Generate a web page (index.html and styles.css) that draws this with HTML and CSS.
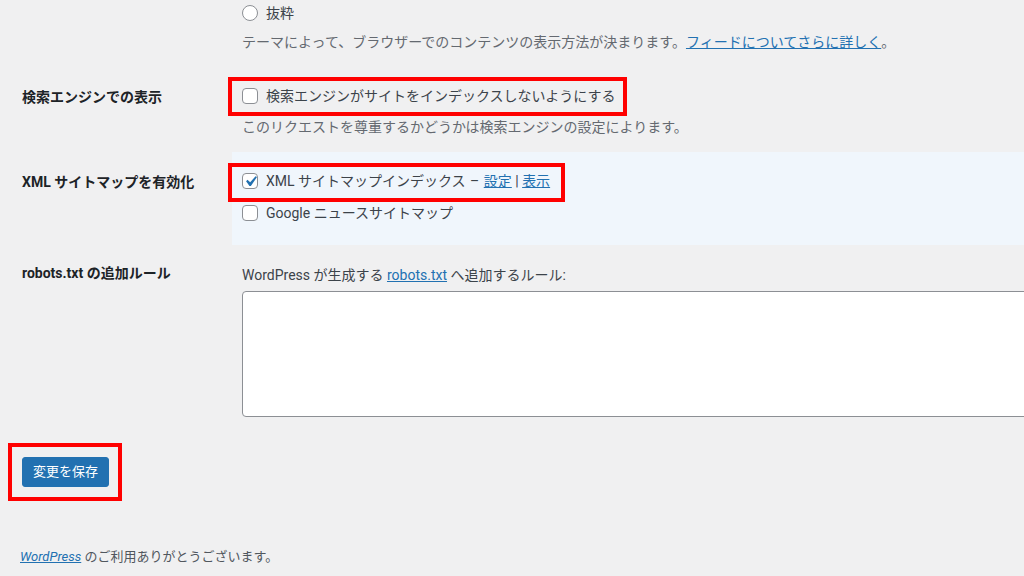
FILE: index.html
```html
<!DOCTYPE html>
<html lang="ja">
<head>
<meta charset="utf-8">
<title>表示設定</title>
<link rel="stylesheet" href="styles.css">
</head>
<body>
<div class="wrap">
  <div class="row row-first">
    <div class="th"></div>
    <div class="td td-first">
      <label class="opt"><span class="radio"></span><span>抜粋</span></label>
      <p class="desc desc-first">テーマによって、ブラウザーでのコンテンツの表示方法が決まります。<a href="#">フィードについてさらに詳しく</a>。</p>
    </div>
  </div>

  <div class="row">
    <div class="th">検索エンジンでの表示</div>
    <div class="td td-search">
      <div><label class="opt hl"><span class="cb"></span><span>検索エンジンがサイトをインデックスしないようにする</span></label></div>
      <p class="desc desc-search">このリクエストを尊重するかどうかは検索エンジンの設定によります。</p>
    </div>
  </div>

  <div class="row row-sitemap">
    <div class="th">XML サイトマップを有効化</div>
    <div class="td td-sitemap">
      <div><label class="opt hl hl-narrow"><span class="cb"><svg viewBox="0 0 20 20" width="21" height="21"><path d="M14.83 4.89l1.34.94-5.81 8.38H9.02L5.78 9.67l1.34-1.25 2.57 2.4z" fill="#2271b1"/></svg></span><span>XML サイトマップインデックス <span class="dash">–</span> <a href="#">設定</a> | <a href="#">表示</a></span></label></div>
      <div class="opt-gap"><label class="opt"><span class="cb"></span><span>Google ニュースサイトマップ</span></label></div>
    </div>
  </div>

  <div class="row">
    <div class="th th-robots">robots.txt の追加ルール</div>
    <div class="td td-robots">
      <p class="robots-text">WordPress が生成する <a href="#">robots.txt</a> へ追加するルール:</p>
      <textarea class="rules"></textarea>
    </div>
  </div>

  <div class="submit">
    <span class="btn-hl"><button class="btn">変更を保存</button></span>
  </div>
</div>
<footer class="footer"><a href="#" class="wp-link">WordPress</a> のご利用ありがとうございます。</footer>
</body>
</html>
```

FILE: styles.css
```css
html, body {
  margin: 0;
  padding: 0;
  background: #f0f0f1;
  overflow: hidden;
  width: 1024px;
  height: 576px;
}
body {
  font-family: Roboto, "Noto Sans CJK JP", sans-serif;
  font-size: 14px;
  color: #3c434a;
}
a {
  color: #2271b1;
  text-decoration: underline;
}
p { margin: 0; }

.wrap {
  padding-left: 22px;
}
.row {
  display: grid;
  grid-template-columns: 210px 1fr;
}
.th {
  font-weight: 700;
  color: #1d2327;
  line-height: 20px;
  padding-top: 20px;
}
.td {
  padding: 15px 10px;
}
.td-first { padding-top: 1px; }
.td-search { padding-top: 17px; }
.td-sitemap {
  background: #f0f6fc;
  padding: 17px 10px 20px;
}
.td-robots { padding-top: 20px; }
.th-robots { padding-top: 18px; }

.opt {
  display: inline-flex;
  align-items: center;
  gap: 8px;
  line-height: 24px;
  height: 24px;
  color: #3c434a;
}
.opt-gap { margin-top: 6px; }

.radio {
  width: 16px;
  height: 16px;
  box-sizing: border-box;
  border: 1px solid #8c8f94;
  border-radius: 50%;
  background: #fff;
}
.cb {
  width: 16px;
  height: 16px;
  box-sizing: border-box;
  border: 1px solid #8c8f94;
  border-radius: 4px;
  background: #fff;
  display: inline-flex;
  align-items: center;
  justify-content: center;
  overflow: visible;
}
.cb svg {
  flex-shrink: 0;
}
.dash {
  color: #3c434a;
  margin: 0 1px;
}

.desc {
  color: #646970;
  line-height: 20px;
}
.desc-first { margin-top: 7px; }
.desc-search { margin-top: 9px; }

.hl {
  position: relative;
}
.hl::after {
  content: "";
  position: absolute;
  top: -7px;
  bottom: -8px;
  left: -14px;
  right: -12px;
  border: 4px solid #ff0000;
}
.hl-narrow::after {
  right: -15px;
  top: -6px;
  bottom: -9px;
}

.robots-text {
  line-height: 20px;
}
.rules {
  display: block;
  margin-top: 6px;
  width: 820px;
  height: 126px;
  box-sizing: border-box;
  border: 1px solid #8c8f94;
  border-radius: 4px;
  background: #fff;
  resize: none;
}

.submit {
  padding-top: 25px;
}
.btn-hl {
  position: relative;
  display: inline-block;
}
.btn-hl::after {
  content: "";
  position: absolute;
  top: -14px;
  bottom: -14px;
  left: -14px;
  right: -13px;
  border: 4px solid #ff0000;
}
.btn {
  display: block;
  height: 30px;
  padding: 0 10px;
  background: #2271b1;
  border: 1px solid #2271b1;
  border-radius: 3px;
  color: #fff;
  font-family: Roboto, "Noto Sans CJK JP", sans-serif;
  font-size: 13px;
  line-height: 28px;
}

.footer {
  padding-left: 20px;
  margin-top: 60px;
  font-size: 13px;
  line-height: 20px;
  color: #50575e;
}
.wp-link {
  font-style: italic;
}
```
